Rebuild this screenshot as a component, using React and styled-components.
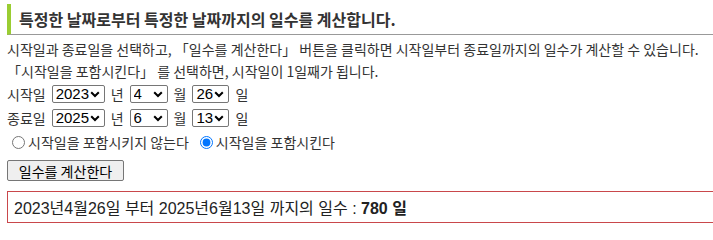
import React, { useState } from "react";
import styled, { createGlobalStyle } from "styled-components";

const Global = createGlobalStyle`
  html, body { margin: 0; padding: 0; background: #fff; overflow: hidden; }
  body { font-family: "Noto Sans CJK KR", "Noto Sans", sans-serif; color: #333; }
`;

const Page = styled.div`
  width: 760px;
  padding: 4px 0 0 7px;
  display: flex;
  flex-direction: column;
`;

const Heading = styled.h2`
  margin: 0;
  height: 30px;
  display: flex;
  align-items: center;
  border-left: 4px solid #9acd32;
  border-bottom: 1px solid #999;
  padding-left: 8px;
  font-size: 16px;
  font-weight: bold;
  color: #333;
`;

const Intro = styled.p`
  margin: 3px 0 0;
  font-size: 14px;
  line-height: 22px;
  color: #333;
`;

const DateRow = styled.div`
  display: flex;
  align-items: center;
  gap: 6px;
  height: 24px;
  font-size: 14px;
  color: #333;
`;

const SelectBox = styled.span`
  position: relative;
  display: inline-flex;
  width: ${(p) => p.$w}px;
  height: 18px;
`;

const Select = styled.select`
  appearance: none;
  -webkit-appearance: none;
  width: 100%;
  height: 100%;
  box-sizing: border-box;
  padding: 0 0 0 3px;
  margin: 0;
  font-family: "Liberation Sans", Arial, sans-serif;
  font-size: 15px;
  line-height: 16px;
  color: #000;
  border: 1px solid #767676;
  border-radius: 2px;
  background: #fff;
`;

const Chevron = styled.svg`
  position: absolute;
  right: 5px;
  top: 6px;
  width: 10px;
  height: 7px;
  pointer-events: none;
`;

const RadioRow = styled.div`
  display: flex;
  align-items: center;
  height: 24px;
  font-size: 14px;
  color: #333;
`;

const RadioLabel = styled.label`
  display: flex;
  align-items: center;
  margin-right: 6px;
`;

const Radio = styled.input`
  margin: 0 3px 0 5px;
  width: 13px;
  height: 13px;
`;

const Button = styled.button`
  align-self: flex-start;
  margin-top: 6px;
  height: 21px;
  width: 117px;
  padding: 0 6px;
  font-family: "Noto Sans CJK KR", sans-serif;
  font-size: 14px;
  color: #000;
  background: #efefef;
  border: 1px solid #767676;
  border-radius: 2px;
`;

const Result = styled.div`
  margin-top: 10px;
  height: 32px;
  box-sizing: border-box;
  border: 1px solid #c9474b;
  display: flex;
  align-items: center;
  padding-left: 6px;
  font-family: "Liberation Sans", "Noto Sans CJK KR", sans-serif;
  font-size: 16px;
  color: #222;
  white-space: nowrap;
`;

const range = (a, b) => Array.from({ length: b - a + 1 }, (_, i) => a + i);

function DropDown({ w, value, options }) {
  return (
    <SelectBox $w={w}>
      <Select defaultValue={value}>
        {options.map((v) => (
          <option key={v}>{v}</option>
        ))}
      </Select>
      <Chevron viewBox="0 0 10 7">
        <path d="M1.2 1.2 L5 5 L8.8 1.2" fill="none" stroke="#000" strokeWidth="2" />
      </Chevron>
    </SelectBox>
  );
}

function DateSelect({ label, y, m, d }) {
  return (
    <DateRow>
      <span>{label}</span>
      <DropDown w={53} value={y} options={range(2000, 2040)} />
      <span>년</span>
      <DropDown w={38} value={m} options={range(1, 12)} />
      <span>월</span>
      <DropDown w={37} value={d} options={range(1, 31)} />
      <span>일</span>
    </DateRow>
  );
}

export default function App() {
  const [inc, setInc] = useState("yes");
  return (
    <>
      <Global />
      <Page>
        <Heading>특정한 날짜로부터 특정한 날짜까지의 일수를 계산합니다.</Heading>
        <Intro>
          시작일과 종료일을 선택하고, 「일수를 계산한다」 버튼을 클릭하면 시작일부터 종료일까지의 일수가 계산할 수 있습니다.
          <br />
          「시작일을 포함시킨다」 를 선택하면, 시작일이 1일째가 됩니다.
        </Intro>
        <DateSelect label="시작일" y="2023" m="4" d="26" />
        <DateSelect label="종료일" y="2025" m="6" d="13" />
        <RadioRow>
          <RadioLabel>
            <Radio type="radio" name="inc" checked={inc === "no"} onChange={() => setInc("no")} />
            시작일을 포함시키지 않는다
          </RadioLabel>
          <RadioLabel>
            <Radio type="radio" name="inc" checked={inc === "yes"} onChange={() => setInc("yes")} />
            시작일을 포함시킨다
          </RadioLabel>
        </RadioRow>
        <Button>일수를 계산한다</Button>
        <Result>
          <span>
            2023년4월26일 부터 2025년6월13일 까지의 일수 : <b>780 일</b>
          </span>
        </Result>
      </Page>
    </>
  );
}
